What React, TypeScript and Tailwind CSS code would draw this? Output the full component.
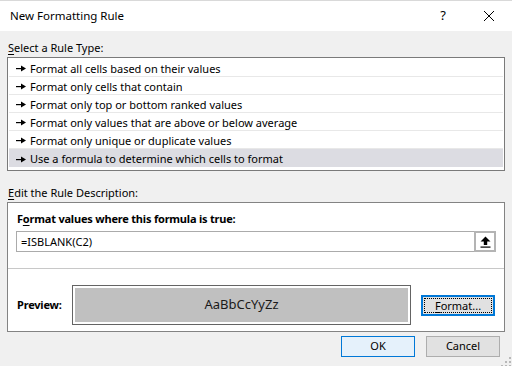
import React from 'react';

const font = { fontFamily: '"Noto Sans", "Open Sans", Arial, sans-serif' };

const rules = [
  'Format all cells based on their values',
  'Format only cells that contain',
  'Format only top or bottom ranked values',
  'Format only values that are above or below average',
  'Format only unique or duplicate values',
  'Use a formula to determine which cells to format',
];

const Bullet = () => (
  <svg width="10" height="7" viewBox="0 0 10 7" className="shrink-0">
    <rect x="0" y="3" width="6" height="1.2" fill="#000" />
    <path d="M5 0.5 L10 3.6 L5 6.5 Z" fill="#000" />
  </svg>
);

const App: React.FC = () => {
  return (
    <div
      className="w-[512px] h-[366px] bg-[#f0f0f0] flex flex-col text-[11px] text-black overflow-hidden"
      style={font}
    >
      {/* Title bar */}
      <div className="h-[31px] bg-white border-t border-[#d9d9d9] flex items-center pl-[10px] shrink-0">
        <span className="text-[11.5px] flex-1">New Formatting Rule</span>
        <span className="w-[46px] text-center text-[13px]">?</span>
        <svg width="46" height="12" viewBox="0 0 46 12">
          <path d="M18 1 L28 11 M28 1 L18 11" stroke="#000" strokeWidth="1" />
        </svg>
      </div>

      <div className="px-[7px] flex flex-col">
        <div className="h-[26px] pt-[9px] pl-[1px] leading-[16px]">
          <span className="underline underline-offset-2">S</span>elect a Rule Type:
        </div>

        {/* Rule type list */}
        <div className="h-[114px] border border-[#7a7a7a] bg-white pt-[1px] px-[1px]">
          {rules.map((r, i) => (
            <div
              key={r}
              className={`h-[18px] flex items-center gap-[4px] pl-[7px] pt-[2px] ${
                i === rules.length - 1 ? 'bg-[#dcdce2]' : 'border-b border-[#e8e8e8]'
              }`}
            >
              <Bullet />
              <span className="leading-[16px]">{r}</span>
            </div>
          ))}
        </div>

        <div className="h-[31px] pt-[14px] pl-[1px] leading-[16px]">
          <span className="underline underline-offset-2">E</span>dit the Rule Description:
        </div>

        {/* Description panel */}
        <div className="h-[130px] border border-[#838383] bg-white flex flex-col">
          <div className="px-[9px] pt-[8px] h-[28px] font-bold leading-[16px] tracking-[-0.2px]">
            F<span className="underline underline-offset-2">o</span>rmat values where this formula is true:
          </div>
          <div className="mx-[8px] h-[21px] border border-[#ababab] flex items-center">
            <span className="flex-1 pl-[4px] leading-[16px]">=ISBLANK(C2)</span>
            <div className="w-[22px] h-[21px] -mr-[1px] border-[2px] border-[#b4b4b4] bg-white flex items-center justify-center">
              <svg width="11" height="12" viewBox="0 0 11 12">
                <path d="M5.5 0.5 L10.5 5.5 L7.2 5.5 L7.2 9 L3.8 9 L3.8 5.5 L0.5 5.5 Z" fill="#000" />
                <rect x="0.5" y="10.5" width="10" height="1.2" fill="#000" />
              </svg>
            </div>
          </div>
          <div className="mt-[16px] border-t border-[#c8c8c8]" />
          <div className="flex items-center pl-[9px] pt-[16px]">
            <span className="w-[55px] font-bold tracking-[-0.2px]">Preview:</span>
            <div className="w-[339px] h-[40px] border border-[#646464] p-[2px]">
              <div className="w-full h-full bg-[#c0c0c0] flex items-center justify-center text-[13px] text-[#1a1a1a]">
                AaBbCcYyZz
              </div>
            </div>
            <button className="ml-[10px] w-[74px] h-[21px] bg-[#e1e1e1] border-[2px] border-[#0078d7] p-[1px] flex">
              <span className="flex-1 border border-dotted border-black flex items-center justify-center leading-none">
                <span className="underline underline-offset-2">F</span>ormat...
              </span>
            </button>
          </div>
        </div>

        {/* Footer buttons */}
        <div className="flex justify-end gap-[11px] pt-[4px] pr-[5px]">
          <button className="w-[74px] h-[21px] bg-[#e5f1fb] border border-[#0078d7] flex items-center justify-center">
            OK
          </button>
          <button className="w-[74px] h-[21px] bg-[#e1e1e1] border border-[#adadad] flex items-center justify-center">
            Cancel
          </button>
        </div>
      </div>

      {/* Resize grip */}
      <div className="flex justify-end pr-[1px] mt-auto pb-[1px]">
        <svg width="10" height="10" viewBox="0 0 10 10">
          <rect x="8" y="0" width="2" height="2" fill="#b8b8b8" />
          <rect x="4" y="4" width="2" height="2" fill="#b8b8b8" />
          <rect x="8" y="4" width="2" height="2" fill="#b8b8b8" />
          <rect x="0" y="8" width="2" height="2" fill="#b8b8b8" />
          <rect x="4" y="8" width="2" height="2" fill="#b8b8b8" />
          <rect x="8" y="8" width="2" height="2" fill="#b8b8b8" />
        </svg>
      </div>
    </div>
  );
};

export default App;
